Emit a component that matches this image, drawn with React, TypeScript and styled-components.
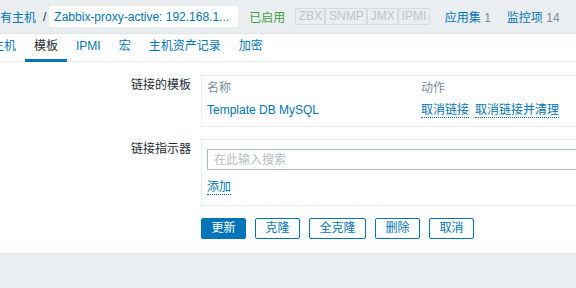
import React from "react";
import styled, { createGlobalStyle } from "styled-components";

const GlobalStyle = createGlobalStyle`
  html, body {
    margin: 0;
    padding: 0;
    background: #ebeef0;
    overflow: hidden;
  }
  body {
    font-family: "Liberation Sans", Arial, "Noto Sans CJK SC", sans-serif;
    font-size: 12px;
    color: #1f2c33;
  }
`;

const blue = "#0275b8";

///Styled Comps

const Page = styled.div`
  width: 900px;
`;

const TopBar = styled.div`
  height: 33px;
  display: flex;
  align-items: center;
  background: #ebeef0;
  border-bottom: 1px solid #dfe4e7;
  margin-left: -12px;
  white-space: nowrap;
`;

const Crumb = styled.a`
  color: ${blue};
  text-decoration: none;
`;

const Slash = styled.span`
  color: #1f2c33;
  margin: 0 3px 0 7px;
`;

const CurrentCrumb = styled.span`
  display: flex;
  align-items: center;
  height: 21px;
  padding: 0 9px 0 5px;
  background: #ffffff;
  color: ${blue};
  border-radius: 2px;
`;

const Enabled = styled.span`
  color: #429e47;
  margin-left: 11px;
`;

const StatusGroup = styled.div`
  display: flex;
  margin-left: 10px;
`;

const StatusBox = styled.span`
  height: 15px;
  line-height: 15px;
  padding: 0 2.5px;
  border: 1px solid #d5dadd;
  color: #bcc4c8;
  font-size: 12px;
`;

const NavItem = styled.span<{ gap: number }>`
  margin-left: ${(p) => p.gap}px;
  color: ${blue};
`;

const Count = styled.span`
  color: #768d99;
`;

const Content = styled.div`
  background: #ffffff;
  border-bottom: 1px solid #dfe4e7;
`;

const Tabs = styled.div`
  height: 27px;
  display: flex;
  border-bottom: 1px solid #ebeef0;
  margin-left: -17px;
`;

const Tab = styled.span<{ active?: boolean }>`
  padding: 0 9px;
  line-height: 25px;
  height: 25px;
  color: ${(p) => (p.active ? "#1f2c33" : blue)};
  border-bottom: 3px solid ${(p) => (p.active ? blue : "transparent")};
  margin-bottom: -1px;
`;

const Form = styled.div`
  padding: 13px 0 14px 0;
`;

const FormRow = styled.div`
  display: flex;
  margin-bottom: 12px;
`;

const Label = styled.div`
  width: 201px;
  padding-right: 10px;
  box-sizing: border-box;
  text-align: right;
  line-height: 20px;
  color: #1f2c33;
`;

const Field = styled.div`
  width: 600px;
`;

const Box = styled.div<{ pad: string }>`
  border: 1px solid #ebeef0;
  padding: ${(p) => p.pad};
`;

const GridRow = styled.div<{ head?: boolean }>`
  display: grid;
  grid-template-columns: 214px 1fr;
  height: ${(p) => (p.head ? "24px" : "21px")};
  line-height: ${(p) => (p.head ? "24px" : "14px")};
  padding-top: ${(p) => (p.head ? "0" : "3px")};
  color: ${(p) => (p.head ? "#768d99" : "#1f2c33")};
`;

const Link = styled.a`
  color: ${blue};
  text-decoration: none;
`;

const DottedLink = styled.a`
  color: ${blue};
  text-decoration: none;
  border-bottom: 1px dotted ${blue};
  margin-right: 6px;
`;

const SearchInput = styled.input`
  display: block;
  box-sizing: border-box;
  width: 100%;
  height: 21px;
  border: 1px solid #acbbc2;
  padding: 0 6px;
  font-family: inherit;
  font-size: 12px;
  outline: none;
  &::placeholder {
    color: #b4bdc1;
  }
`;

const AddRow = styled.div`
  margin-top: 9px;
  line-height: 16px;
`;

const Buttons = styled.div`
  display: flex;
  gap: 9px;
  padding-left: 201px;
  margin-top: 1px;
`;

const Button = styled.button<{ primary?: boolean }>`
  height: 21px;
  padding: 0 9.5px;
  border: 1px solid ${blue};
  border-radius: 2px;
  background: ${(p) => (p.primary ? blue : "#ffffff")};
  color: ${(p) => (p.primary ? "#ffffff" : blue)};
  font-family: inherit;
  font-size: 12px;
  line-height: 19px;
  cursor: pointer;
`;

///////

const App: React.FC = () => {
  const tabs = ["主机", "模板", "IPMI", "宏", "主机资产记录", "加密"];

  return (
    <Page>
      <GlobalStyle />
      <TopBar>
        <Crumb>所有主机</Crumb>
        <Slash>/</Slash>
        <CurrentCrumb>Zabbix-proxy-active: 192.168.1...</CurrentCrumb>
        <Enabled>已启用</Enabled>
        <StatusGroup>
          <StatusBox>ZBX</StatusBox>
          <StatusBox>SNMP</StatusBox>
          <StatusBox>JMX</StatusBox>
          <StatusBox>IPMI</StatusBox>
        </StatusGroup>
        <NavItem gap={15}>
          应用集 <Count>1</Count>
        </NavItem>
        <NavItem gap={16}>
          监控项 <Count>14</Count>
        </NavItem>
      </TopBar>
      <Content>
        <Tabs>
          {tabs.map((t) => (
            <Tab key={t} active={t === "模板"}>
              {t}
            </Tab>
          ))}
        </Tabs>
        <Form>
          <FormRow>
            <Label>链接的模板</Label>
            <Field>
              <Box pad="0 5px 2px 5px">
                <GridRow head>
                  <span>名称</span>
                  <span>动作</span>
                </GridRow>
                <GridRow>
                  <span>
                    <Link>Template DB MySQL</Link>
                  </span>
                  <span>
                    <DottedLink>取消链接</DottedLink>
                    <DottedLink>取消链接并清理</DottedLink>
                  </span>
                </GridRow>
              </Box>
            </Field>
          </FormRow>
          <FormRow>
            <Label>链接指示器</Label>
            <Field>
              <Box pad="9px 5px 10px 5px">
                <SearchInput placeholder="在此输入搜索" />
                <AddRow>
                  <DottedLink>添加</DottedLink>
                </AddRow>
              </Box>
            </Field>
          </FormRow>
          <Buttons>
            <Button primary>更新</Button>
            <Button>克隆</Button>
            <Button>全克隆</Button>
            <Button>删除</Button>
            <Button>取消</Button>
          </Buttons>
        </Form>
      </Content>
    </Page>
  );
};

export default App;
